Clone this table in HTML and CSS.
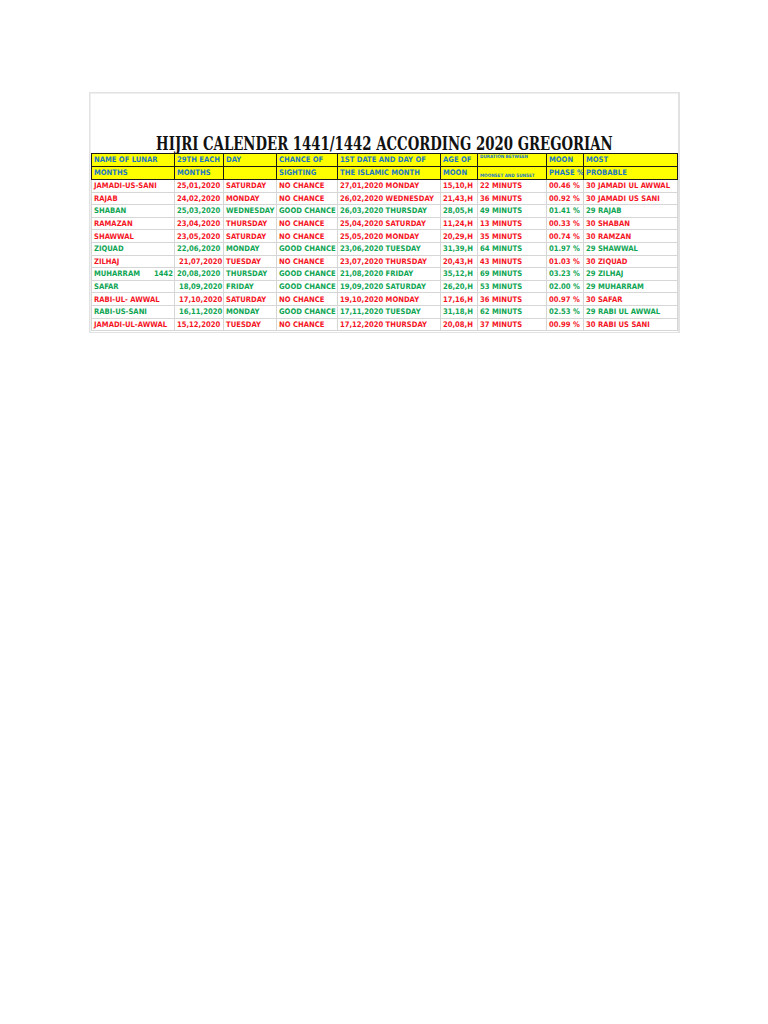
FILE: index.html
```html
<!DOCTYPE html>
<html>
<head>
<meta charset="utf-8">
<link rel="stylesheet" href="styles.css">
</head>
<body>
<div class="sheet">
  <div class="title-area">
    <h1 class="title">HIJRI CALENDER 1441/1442 ACCORDING 2020 GREGORIAN</h1>
  </div>
  <table class="cal">
    <colgroup>
      <col class="c1"><col class="c2"><col class="c3"><col class="c4"><col class="c5"><col class="c6"><col class="c7"><col class="c8"><col class="c9">
    </colgroup>
    <thead>
      <tr class="h">
        <td>NAME OF LUNAR</td><td>29TH EACH</td><td>DAY</td><td>CHANCE OF</td><td>1ST DATE AND DAY OF</td><td>AGE OF</td><td class="tiny top">DURATION BETWEEN</td><td>MOON</td><td>MOST</td>
      </tr>
      <tr class="h">
        <td>MONTHS</td><td>MONTHS</td><td></td><td>SIGHTING</td><td>THE ISLAMIC MONTH</td><td>MOON</td><td class="tiny bottom">MOONSET AND SUNSET</td><td>PHASE %</td><td>PROBABLE</td>
      </tr>
    </thead>
    <tbody>
      <tr class="r"><td>JAMADI-US-SANI</td><td>25,01,2020</td><td>SATURDAY</td><td>NO CHANCE</td><td>27,01,2020 MONDAY</td><td>15,10,H</td><td>22 MINUTS</td><td>00.46 %</td><td>30 JAMADI UL AWWAL</td></tr>
      <tr class="r"><td>RAJAB</td><td>24,02,2020</td><td>MONDAY</td><td>NO CHANCE</td><td>26,02,2020 WEDNESDAY</td><td>21,43,H</td><td>36 MINUTS</td><td>00.92 %</td><td>30 JAMADI US SANI</td></tr>
      <tr class="g"><td>SHABAN</td><td>25,03,2020</td><td>WEDNESDAY</td><td>GOOD CHANCE</td><td>26,03,2020 THURSDAY</td><td>28,05,H</td><td>49 MINUTS</td><td>01.41 %</td><td>29 RAJAB</td></tr>
      <tr class="r"><td>RAMAZAN</td><td>23,04,2020</td><td>THURSDAY</td><td>NO CHANCE</td><td>25,04,2020 SATURDAY</td><td>11,24,H</td><td>13 MINUTS</td><td>00.33 %</td><td>30 SHABAN</td></tr>
      <tr class="r"><td>SHAWWAL</td><td>23,05,2020</td><td>SATURDAY</td><td>NO CHANCE</td><td>25,05,2020 MONDAY</td><td>20,29,H</td><td>35 MINUTS</td><td>00.74 %</td><td>30 RAMZAN</td></tr>
      <tr class="g"><td>ZIQUAD</td><td>22,06,2020</td><td>MONDAY</td><td>GOOD CHANCE</td><td>23,06,2020 TUESDAY</td><td>31,39,H</td><td>64 MINUTS</td><td>01.97 %</td><td>29 SHAWWAL</td></tr>
      <tr class="r"><td>ZILHAJ</td><td class="ind">21,07,2020</td><td>TUESDAY</td><td>NO CHANCE</td><td>23,07,2020 THURSDAY</td><td>20,43,H</td><td>43 MINUTS</td><td>01.03 %</td><td>30 ZIQUAD</td></tr>
      <tr class="g"><td>MUHARRAM<span class="yr">1442</span></td><td>20,08,2020</td><td>THURSDAY</td><td>GOOD CHANCE</td><td>21,08,2020 FRIDAY</td><td>35,12,H</td><td>69 MINUTS</td><td>03.23 %</td><td>29 ZILHAJ</td></tr>
      <tr class="g"><td>SAFAR</td><td class="ind">18,09,2020</td><td>FRIDAY</td><td>GOOD CHANCE</td><td>19,09,2020 SATURDAY</td><td>26,20,H</td><td>53 MINUTS</td><td>02.00 %</td><td>29 MUHARRAM</td></tr>
      <tr class="r"><td>RABI-UL- AWWAL</td><td class="ind">17,10,2020</td><td>SATURDAY</td><td>NO CHANCE</td><td>19,10,2020 MONDAY</td><td>17,16,H</td><td>36 MINUTS</td><td>00.97 %</td><td>30 SAFAR</td></tr>
      <tr class="g"><td>RABI-US-SANI</td><td class="ind">16,11,2020</td><td>MONDAY</td><td>GOOD CHANCE</td><td>17,11,2020 TUESDAY</td><td>31,18,H</td><td>62 MINUTS</td><td>02.53 %</td><td>29 RABI UL AWWAL</td></tr>
      <tr class="r"><td>JAMADI-UL-AWWAL</td><td>15,12,2020</td><td>TUESDAY</td><td>NO CHANCE</td><td>17,12,2020 THURSDAY</td><td>20,08,H</td><td>37 MINUTS</td><td>00.99 %</td><td>30 RABI US SANI</td></tr>
    </tbody>
  </table>
</div>
</body>
</html>
```

FILE: styles.css
```css
html, body {
  margin: 0;
  padding: 0;
  background: #ffffff;
}

.sheet {
  margin: 92px 0 0 89px;
  width: 586px;
  border: 1px solid #e2e2e2;
  border-right-width: 2px;
  box-shadow: inset 1px 1px 0 #efefef;
  padding: 0 1px 1px 1px;
}

.title-area {
  height: 60px;
  display: flex;
  flex-direction: column;
  justify-content: flex-end;
  align-items: center;
}

.title {
  display: inline-block;
  margin: 0 0 -1px 0;
  white-space: nowrap;
  text-align: center;
  font-family: "DejaVu Serif Condensed", "DejaVu Serif", serif;
  font-weight: bold;
  font-size: 18px;
  line-height: 20px;
  color: #111111;
  transform: scaleX(0.82);
}

.cal {
  border-collapse: collapse;
  table-layout: fixed;
  width: 586px;
  font-family: "DejaVu Sans Condensed", "DejaVu Sans", sans-serif;
  font-weight: bold;
  font-size: 7.6px;
}

.c1 { width: 83px; }
.c2 { width: 49px; }
.c3 { width: 53px; }
.c4 { width: 61px; }
.c5 { width: 103px; }
.c6 { width: 37px; }
.c7 { width: 69px; }
.c8 { width: 37px; }
.c9 { width: 94px; }

.cal td {
  padding: 0 0 0 2px;
  white-space: nowrap;
  overflow: hidden;
  vertical-align: middle;
}

.cal td.ind { padding-left: 4px; }

.h td {
  background: #ffff00;
  border: 1px solid #1a1a1a;
  color: #1b78c0;
  height: 12px;
  line-height: 12px;
}

.h td.tiny {
  font-size: 4.6px;
  line-height: 6px;
}

.h td.top { vertical-align: top; }
.h td.bottom { vertical-align: bottom; }

.cal tbody td {
  border: 1px solid #d6d6d6;
  height: 11.6px;
  line-height: 11px;
}

.r td { color: #f5141f; }
.g td { color: #0ea553; }

.yr {
  float: right;
  margin-right: 1px;
}
```
